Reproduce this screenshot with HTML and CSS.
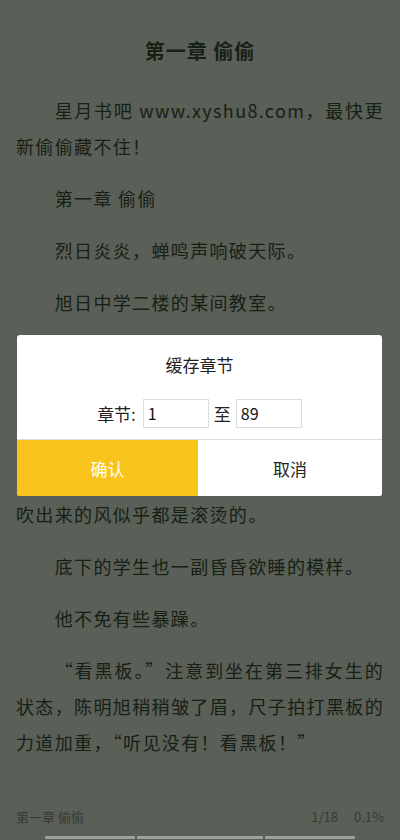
FILE: index.html
```html
<!DOCTYPE html>
<html lang="zh-CN">
<head>
<meta charset="utf-8">
<title>阅读</title>
<link rel="stylesheet" href="styles.css">
</head>
<body>
<div class="screen">
  <main class="reader">
    <h1 class="chapter-title">第一章 偷偷</h1>
    <p class="para">星月书吧 www.xyshu8.com，最快更新偷偷藏不住！</p>
    <p class="para">第一章 偷偷</p>
    <p class="para">烈日炎炎，蝉鸣声响破天际。</p>
    <p class="para">旭日中学二楼的某间教室。</p>
    <p class="para covered">讲台上，陈明旭拿着尺子敲了敲黑板。</p>
    <p class="para"><span class="covered">窗外的知了不知疲倦地叫着，头顶上的老式吊扇吱呀吱呀地转个不停，可是却丝毫没有带来一点凉意，从窗户外面灌进教室里</span>吹出来的风似乎都是滚烫的。</p>
    <p class="para">底下的学生也一副昏昏欲睡的模样。</p>
    <p class="para">他不免有些暴躁。</p>
    <p class="para">“看黑板。”注意到坐在第三排女生的状态，陈明旭稍稍皱了眉，尺子拍打黑板的力道加重，“听见没有！看黑板！”</p>
  </main>
  <footer class="status">
    <span class="status-chapter">第一章 偷偷</span>
    <span class="status-right"><span class="status-page">1/18</span><span class="status-pct">0.1%</span></span>
  </footer>
  <div class="navbar">
    <span class="nav-seg seg-a"></span>
    <span class="nav-seg seg-b"></span>
    <span class="nav-seg seg-c"></span>
  </div>

  <div class="dialog">
    <div class="dialog-title">缓存章节</div>
    <div class="dialog-row">
      <span class="row-label">章节:</span>
      <span class="field">1</span>
      <span class="row-to">至</span>
      <span class="field">89</span>
    </div>
    <div class="dialog-actions">
      <button class="btn btn-ok">确认</button>
      <button class="btn btn-cancel">取消</button>
    </div>
  </div>
</div>
</body>
</html>
```
FILE: styles.css
```css
html, body {
  margin: 0;
  padding: 0;
}
body {
  width: 400px;
  height: 840px;
  overflow: hidden;
  background: #5a5f57;
  font-family: "Noto Sans CJK SC", "Noto Sans", sans-serif;
}
.screen {
  position: relative;
  width: 400px;
  height: 840px;
  display: flex;
  flex-direction: column;
  background: #5a5f57;
}
.reader {
  flex: 1;
  overflow: hidden;
  padding: 0 16px;
  color: #172015;
}
.covered {
  visibility: hidden;
}
.chapter-title {
  margin: 33px 0 23px;
  font-size: 20px;
  line-height: 36px;
  font-weight: 700;
  letter-spacing: 1px;
  text-align: center;
}
.para {
  margin: 0 0 16px;
  font-size: 18px;
  font-weight: 400;
  line-height: 36px;
  letter-spacing: 1.35px;
  text-indent: 38.7px;
  text-align: justify;
}
.status {
  display: flex;
  justify-content: space-between;
  align-items: center;
  padding: 0 16px;
  height: 20px;
  margin-bottom: 4px;
  font-size: 13px;
  color: #363b34;
}
.status-right {
  display: flex;
  gap: 16px;
}
.navbar {
  display: flex;
  gap: 2px;
  padding-left: 45px;
  height: 10px;
  padding-bottom: 1px;
  box-sizing: border-box;
  align-items: flex-end;
}
.nav-seg {
  height: 3px;
  background: #9da298;
  border-radius: 1px;
}
.seg-a { width: 90px; }
.seg-b { width: 126px; }
.seg-c { width: 90px; }

.dialog {
  position: absolute;
  left: 17px;
  top: 335px;
  width: 365px;
  height: 161px;
  background: #ffffff;
  border-radius: 3px;
  overflow: hidden;
  display: flex;
  flex-direction: column;
}
.dialog-title {
  height: 50px;
  padding-top: 17px;
  box-sizing: border-box;
  text-align: center;
  font-size: 17px;
  line-height: 26px;
  color: #222;
}
.dialog-row {
  display: flex;
  justify-content: center;
  align-items: center;
  gap: 5px;
  height: 54px;
  padding-top: 2px;
  box-sizing: border-box;
  font-size: 17px;
  color: #222;
}
.row-label { margin-right: 2px; }
.field {
  width: 66px;
  height: 29px;
  box-sizing: border-box;
  border: 1px solid #dcdcdc;
  padding-left: 4px;
  font-size: 16px;
  line-height: 27px;
  color: #111;
}
.dialog-actions {
  flex: 1;
  display: flex;
  border-top: 1px solid #dcdcdc;
}
.btn {
  border: none;
  margin: 0;
  padding: 0;
  font-family: inherit;
  font-size: 17px;
  cursor: pointer;
}
.btn-ok {
  width: 181px;
  background: #f9c31b;
  color: #ffffff;
}
.btn-cancel {
  flex: 1;
  background: #ffffff;
  color: #222;
}
```
